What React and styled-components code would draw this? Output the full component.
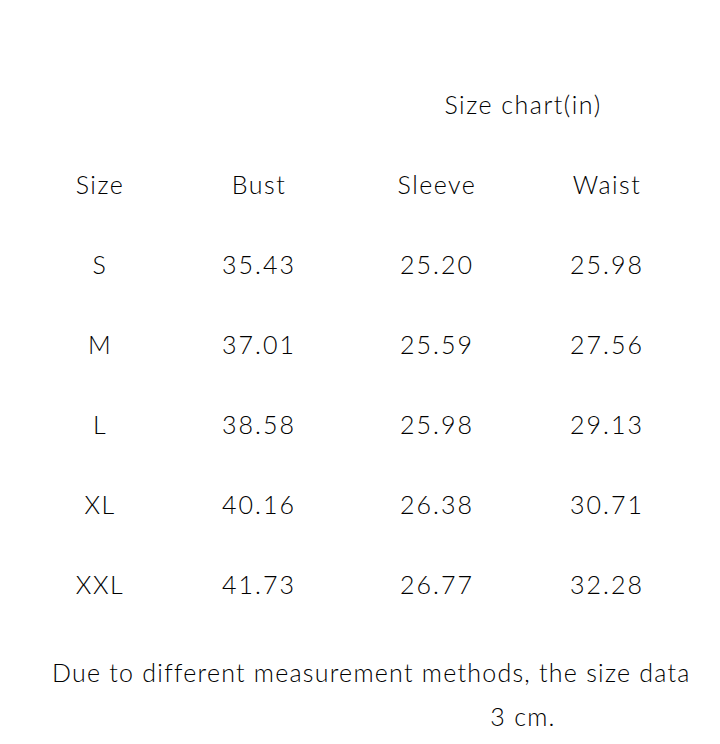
import React from "react";
import styled, { createGlobalStyle } from "styled-components";

const Global = createGlobalStyle`
  html, body { margin: 0; padding: 0; background: #ffffff; }
  body { overflow: hidden; font-family: Lato, "Noto Sans", sans-serif; font-weight: 300; color: #000000; }
`;

const Page = styled.div`
  width: 720px;
  height: 744px;
  padding-top: 64px;
  box-sizing: border-box;
  overflow: hidden;
`;

const Title = styled.div`
  font-size: 25px;
  line-height: 80px;
  text-align: center;
  padding-left: 326px;
  white-space: nowrap;
  letter-spacing: 0.06em;
`;

const Table = styled.div`
  display: grid;
  grid-template-columns: 160px 158px 198px 142px;
  grid-auto-rows: 80px;
  margin-left: 20px;
`;

const Cell = styled.div`
  font-size: 25px;
  line-height: 80px;
  text-align: center;
  white-space: nowrap;
  letter-spacing: ${(p) => (p.$num ? "0.08em" : "0.06em")};
`;

const Footer = styled.div`
  margin-top: 26px;
  font-size: 25px;
  line-height: 44px;
  white-space: nowrap;
`;

const Line = styled.div`
  padding-left: ${(p) => p.$indent || 0}px;
  text-align: ${(p) => (p.$center ? "center" : "left")};
  letter-spacing: 0.05em;
`;

const headers = ["Size", "Bust", "Sleeve", "Waist"];
const rows = [
  ["S", "35.43", "25.20", "25.98"],
  ["M", "37.01", "25.59", "27.56"],
  ["L", "38.58", "25.98", "29.13"],
  ["XL", "40.16", "26.38", "30.71"],
  ["XXL", "41.73", "26.77", "32.28"],
];

export default function App() {
  return (
    <>
      <Global />
      <Page>
        <Title>Size chart(in)</Title>
        <Table>
          {headers.map((h) => (
            <Cell key={h}>{h}</Cell>
          ))}
          {rows.map((r) =>
            r.map((v, i) => (
              <Cell key={r[0] + i} $num={i > 0}>
                {v}
              </Cell>
            ))
          )}
        </Table>
        <Footer>
          <Line $indent={52}>Due to different measurement methods, the size data</Line>
          <Line $center $indent={326}>3 cm.</Line>
        </Footer>
      </Page>
    </>
  );
}
